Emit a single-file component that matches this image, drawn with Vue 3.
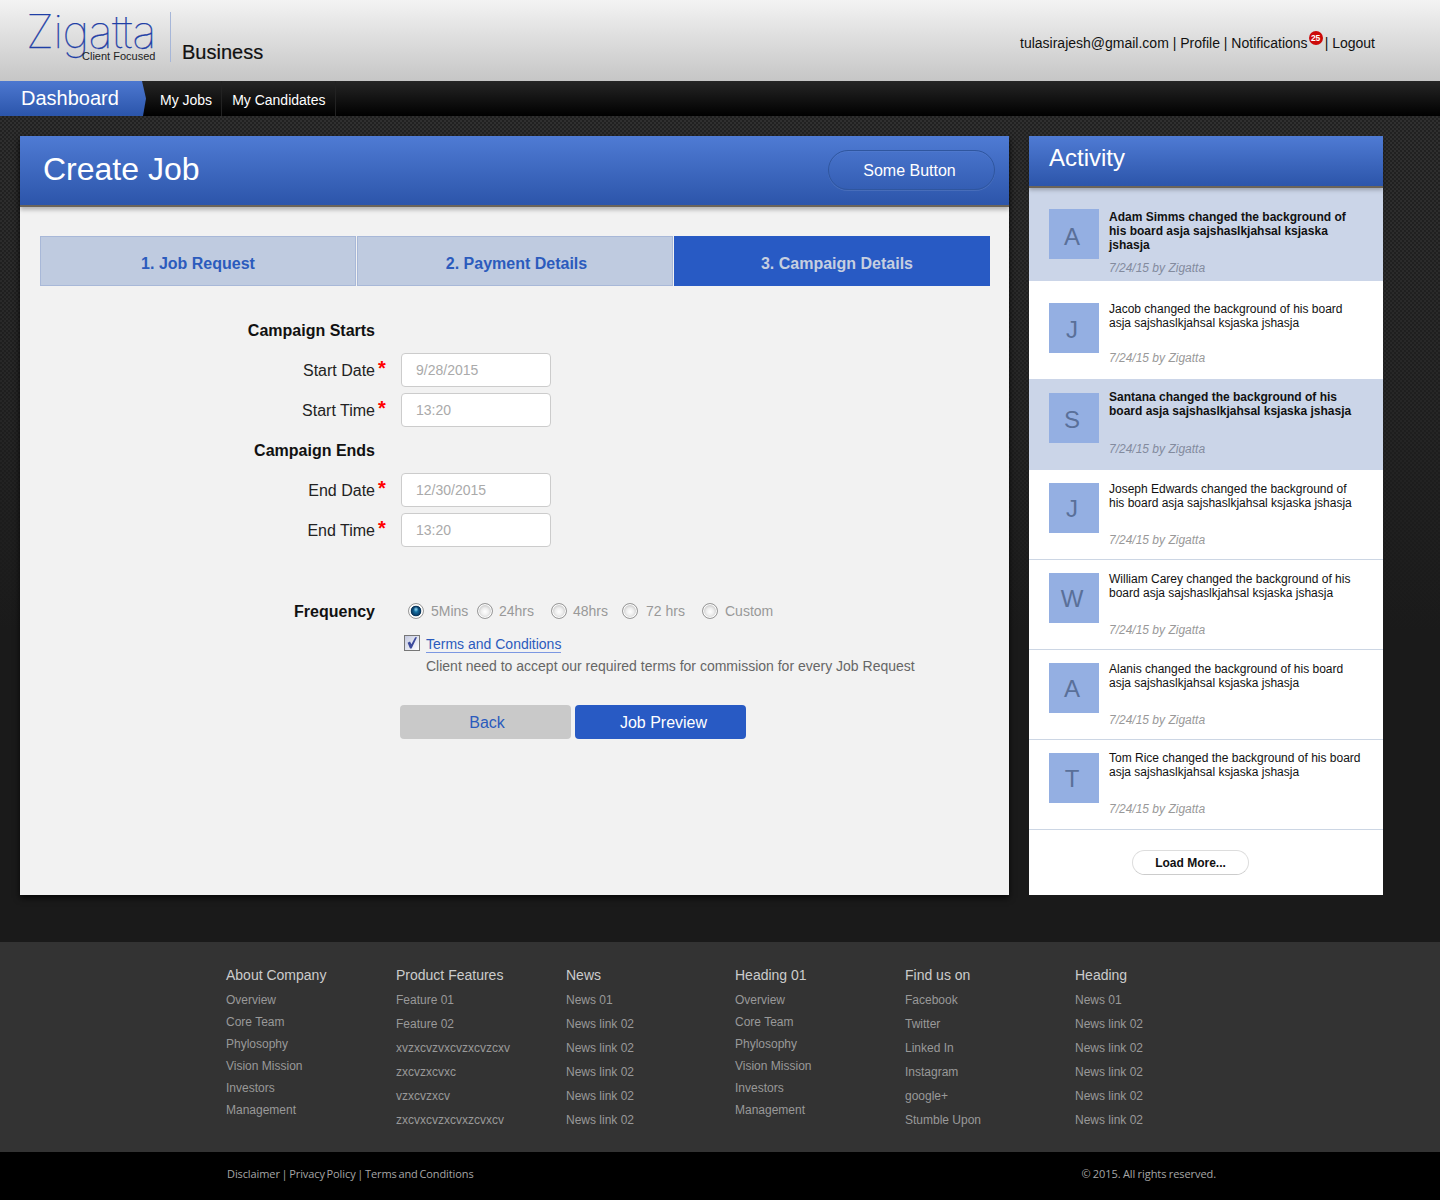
<script setup>
const steps = [
  { label: '1. Job Request', active: false },
  { label: '2. Payment Details', active: false },
  { label: '3. Campaign Details', active: true }
]
const sections = [
  { title: 'Campaign Starts', fields: [{ label: 'Start Date', value: '9/28/2015' }, { label: 'Start Time', value: '13:20' }] },
  { title: 'Campaign Ends', fields: [{ label: 'End Date', value: '12/30/2015' }, { label: 'End Time', value: '13:20' }] }
]
const radios = ['5Mins', '24hrs', '48hrs', '72 hrs', 'Custom']
const activity = [
  { l: 'A', t: 'Adam Simms changed the background of his board asja sajshaslkjahsal ksjaska jshasja', hi: true },
  { l: 'J', t: 'Jacob changed the background of his board asja sajshaslkjahsal ksjaska jshasja' },
  { l: 'S', t: 'Santana changed the background of his board asja sajshaslkjahsal ksjaska jshasja', hi: true },
  { l: 'J', t: 'Joseph Edwards changed the background of his board asja sajshaslkjahsal ksjaska jshasja' },
  { l: 'W', t: 'William Carey changed the background of his board asja sajshaslkjahsal ksjaska jshasja' },
  { l: 'A', t: 'Alanis changed the background of his board asja sajshaslkjahsal ksjaska jshasja' },
  { l: 'T', t: 'Tom Rice changed the background of his board asja sajshaslkjahsal ksjaska jshasja' }
]
const news = ['News 01', 'News link 02', 'News link 02', 'News link 02', 'News link 02', 'News link 02']
const company = ['Overview', 'Core Team', 'Phylosophy', 'Vision Mission', 'Investors', 'Management']
const footer = [
  { h: 'About Company', items: company, tight: true },
  { h: 'Product Features', items: ['Feature 01', 'Feature 02', 'xvzxcvzvxcvzxcvzcxv', 'zxcvzxcvxc', 'vzxcvzxcv', 'zxcvxcvzxcvxzcvxcv'] },
  { h: 'News', items: news },
  { h: 'Heading 01', items: company, tight: true },
  { h: 'Find us on', items: ['Facebook', 'Twitter', 'Linked In', 'Instagram', 'google+', 'Stumble Upon'] },
  { h: 'Heading', items: news }
]
</script>

<template>
  <div class="page">
    <header class="top">
      <div class="logo">
        <span class="logo-word">Zigatta</span>
        <span class="logo-tag">Client Focused</span>
      </div>
      <div class="logo-rule"></div>
      <div class="biz">Business</div>
      <div class="user">
        <span>tulasirajesh@gmail.com</span> | <span>Profile</span> | <span class="notif">Notifications<b class="badge">25</b></span><span class="after-notif">| Logout</span>
      </div>
    </header>

    <nav class="nav">
      <div class="dash">Dashboard</div>
      <a class="nav-link">My Jobs</a>
      <a class="nav-link">My Candidates</a>
    </nav>

    <main class="main">
      <section class="card">
        <div class="card-head">
          <h1>Create Job</h1>
          <button class="some-btn">Some Button</button>
        </div>
        <div class="tabs">
          <div v-for="s in steps" :key="s.label" class="tab" :class="{ on: s.active }">{{ s.label }}</div>
        </div>
        <form class="form" @submit.prevent>
          <template v-for="sec in sections" :key="sec.title">
            <div class="row"><div class="lab strong">{{ sec.title }}</div></div>
            <div v-for="f in sec.fields" :key="f.label" class="row">
              <label class="lab">{{ f.label }}</label>
              <span class="star">*</span>
              <div class="field">{{ f.value }}</div>
            </div>
          </template>
          <div class="row freq">
            <div class="lab strong">Frequency</div>
            <div class="radios">
              <div v-for="(r, i) in radios" :key="r" class="radio-item">
                <span class="radio" :class="{ sel: i === 0 }"></span>{{ r }}
              </div>
            </div>
          </div>
          <div class="terms">
            <span class="check">
              <svg width="14" height="14" viewBox="0 0 14 14"><path d="M2.6 6.8 L5 5.6 L6.4 8.2 L10.2 1.2 L12 1.2 L6.6 12.4 L5 12.4 Z" fill="#3c4a9c"/></svg>
            </span>
            <div>
              <a class="terms-link">Terms and Conditions</a>
              <p class="terms-note">Client need to accept our required terms for commission for every Job Request</p>
            </div>
          </div>
          <div class="actions">
            <button class="btn back">Back</button>
            <button class="btn go">Job Preview</button>
          </div>
        </form>
      </section>

      <aside class="side">
        <div class="side-head">Activity</div>
        <div v-for="(a, i) in activity" :key="i" class="item" :class="{ hi: a.hi }">
          <div class="avatar">{{ a.l }}</div>
          <div class="item-body">
            <p class="item-text">{{ a.t }}</p>
            <p class="item-date">7/24/15 by Zigatta</p>
          </div>
        </div>
        <div class="more-wrap"><button class="more">Load More...</button></div>
      </aside>
    </main>

    <footer class="foot">
      <div class="foot-cols">
        <div v-for="c in footer" :key="c.h" class="col" :class="{ tight: c.tight }">
          <h4>{{ c.h }}</h4>
          <a v-for="(it, i) in c.items" :key="i">{{ it }}</a>
        </div>
      </div>
    </footer>
    <div class="bottom">
      <span class="legal">Disclaimer | Privacy Policy | Terms and Conditions</span>
      <span>© 2015. All rights reserved.</span>
    </div>
  </div>
</template>

<style>
html, body { margin: 0; background: #000; }
</style>

<style scoped>
.page { width: 1440px; font-family: "Liberation Sans", Arial, sans-serif; }
p, h1, h4 { margin: 0; font-weight: normal; }
button { font-family: inherit; cursor: pointer; border: 0; }

.top {
  position: relative; height: 81px;
  background: linear-gradient(#f3f3f3, #c6c6c6);
  display: flex; align-items: flex-start;
}
.logo { position: relative; width: 170px; height: 81px; flex: none; }
.logo-word {
  position: absolute; left: 26px; top: 3px;
  font-family: Inter, sans-serif; font-weight: 100; font-size: 46px; line-height: 56px;
  letter-spacing: -0.7px; color: #1f3fa6; -webkit-text-stroke: 0.25px #1f3fa6;
}
.logo-tag { position: absolute; left: 82px; top: 50px; font-size: 11px; line-height: 12px; color: #222; }
.logo-rule { width: 1px; height: 50px; margin-top: 12px; background: #a6b6d8; flex: none; }
.biz { margin: 41px 0 0 11px; font-size: 20px; line-height: 23px; color: #111; -webkit-text-stroke: 0.2px #111; }
.user {
  position: absolute; left: 1020px; top: 35px; font-size: 14px; line-height: 16px; color: #111; white-space: pre;
}
.notif { position: relative; }
.after-notif { margin-left: 17px; }
.badge {
  position: absolute; left: 100%; top: -4px; margin-left: 1px; width: 14px; height: 14px; border-radius: 50%;
  background: #cc0a0a; color: #fff; font-size: 8.5px; line-height: 14px; text-align: center; font-weight: bold;
}

.nav {
  height: 35px; display: flex; align-items: stretch;
  background: linear-gradient(#262626, #000);
}
.dash {
  width: 146px; box-sizing: border-box; padding-left: 21px; margin-right: 4px;
  background: linear-gradient(#4d78d0, #2b55ab);
  clip-path: polygon(0 0, 142px 0, 146px 50%, 143px 100%, 0 100%);
  color: #fff; font-size: 20px; line-height: 34px;
}
.nav-link {
  padding: 0 9px 0 10px; color: #fff; font-size: 14px; line-height: 38px;
  border-right: 1px solid #222;
}

.main {
  height: 826px; box-sizing: border-box; padding: 20px; display: flex; gap: 20px; align-items: flex-start;
  background-color: #1a1a1a;
  background-image:
    linear-gradient(rgba(26,26,26,0) 0, rgba(26,26,26,.45) 300px, #1a1a1a 515px),
    radial-gradient(circle at 1px 1px, #3a3a3a 0.5px, rgba(0,0,0,0) 1px),
    radial-gradient(circle at 3px 3px, #3a3a3a 0.5px, rgba(0,0,0,0) 1px),
    linear-gradient(#212121, #212121);
  background-size: 100% 100%, 4px 4px, 4px 4px, 100% 100%;
}
.card {
  width: 989px; height: 759px; background: #f2f2f2; box-shadow: 0 3px 6px rgba(0,0,0,.75);
}
.card-head {
  height: 69px; box-sizing: border-box; padding: 0 14px 0 23px;
  display: flex; align-items: center; justify-content: space-between;
  background: linear-gradient(#4f7bd4, #2c55aa);
  box-shadow: 0 2px 0 #6b6459, 0 5px 4px rgba(0,0,0,.25);
}
.card-head h1 { color: #fff; font-size: 32px; line-height: 37px; margin-top: -2px; }
.some-btn {
  width: 167px; height: 40px; border-radius: 20px; background: transparent; margin-top: -1px; padding: 2px 4px 0 0;
  border: 1px solid #2f569f; box-shadow: 0 1px 0 rgba(255,255,255,.1), inset 0 1px 0 rgba(255,255,255,.04);
  color: #fff; font-size: 16px;
}
.tabs { display: flex; gap: 1px; margin: 31px 19px 0 20px; }
.tab {
  flex: none; width: 316px; height: 50px; box-sizing: border-box; background: #bfcbe0; border: 1px solid #a8b8d8;
  color: #2b5bbd; font-size: 16px; font-weight: bold; line-height: 53px; text-align: center;
}
.tab:nth-child(2) { padding-left: 3px; }
.tab.on { background: #285ac4; border-color: #285ac4; color: #c6cfe0; padding-left: 10px; }

.form { padding-top: 27px; display: flex; flex-direction: column; gap: 6px; }
.row { display: flex; height: 34px; align-items: center; }
.lab { width: 355px; text-align: right; font-size: 16px; color: #222; line-height: 36px; height: 34px; flex: none; }
.lab.strong { font-weight: bold; color: #111; }
.star { width: 26px; flex: none; box-sizing: border-box; padding-left: 3px; color: #f00; font-size: 20px; font-weight: bold; line-height: 22px; height: 22px; margin-top: -5px; }
.field {
  width: 150px; height: 34px; box-sizing: border-box; padding-left: 14px; background: #fff;
  border: 1px solid #ccc; border-radius: 4px; color: #aaa; font-size: 14px; line-height: 32px;
}
.freq { margin-top: 41px; }
.radios {
  margin-left: 33px; display: grid; grid-template-columns: 69px 74px 71px 80px auto;
  color: #999; font-size: 14px; line-height: 34px;
}
.radio-item { display: flex; align-items: center; gap: 7px; }
.radio-item:nth-child(2), .radio-item:nth-child(3) { gap: 6px; }
.radio-item:nth-child(4) { gap: 8px; }
.radio {
  width: 14px; height: 14px; border: 1px solid #999; border-radius: 50%;
  background: radial-gradient(circle at 50% 55%, #fff 0, #eee 35%, #bbb 80%, #ddd 100%);
  box-shadow: inset 0 0 0 1px #fff;
}
.radio.sel {
  background:
    radial-gradient(circle at 50% 38%, #9adcf8 0, rgba(154,220,248,0) 2.5px),
    radial-gradient(circle at 50% 50%, #1c86b8 0, #0c4a78 3.5px, #0a3458 5px, #eee 5.6px, #ddd 100%);
}
.terms { display: flex; gap: 6px; margin: 1px 0 0 384px; }
.check {
  width: 16px; height: 16px; box-sizing: border-box; border: 1px solid #777;
  background: linear-gradient(135deg, #c4c9e0, #fff); flex: none;
  display: flex; align-items: center; justify-content: center;
}
.terms-link { display: inline-block; color: #2b5bbd; font-size: 14px; line-height: 16px; border-bottom: 1px solid #7b97e2; }
.terms-note { margin-top: 5px; color: #666; font-size: 14px; line-height: 16px; white-space: nowrap; }
.actions { display: flex; gap: 4px; margin: 25px 0 0 380px; }
.btn { width: 171px; height: 34px; border-radius: 4px; font-size: 16px; }
.back { background: #c9c9c9; color: #2b5bbd; padding: 2px 0 0 3px; }
.go { background: #285ac4; color: #fff; padding: 2px 0 0 6px; }

.side { width: 354px; height: 759px; background: #fff; display: flex; flex-direction: column; }
.side-head {
  height: 50px; box-sizing: border-box; padding: 8px 20px 0; flex: none;
  background: linear-gradient(#4f7bd4, #2c55aa); color: #fff; font-size: 24px; line-height: 28px;
  box-shadow: 0 2px 0 #6b6459, 0 4px 4px rgba(0,0,0,.25); position: relative;
}
.item { display: flex; gap: 10px; box-sizing: border-box; height: 90px; padding: 13px 20px 0; }
.item:not(.hi) { border-bottom: 1px solid #ccd6e4; }
.item.hi { background: #cbd5e8; }
.avatar {
  width: 50px; height: 50px; box-sizing: border-box; padding-right: 4px; background: #94afe2; color: #5a7099;
  font-size: 24px; line-height: 52px; text-align: center; flex: none;
}
.item-text { margin-top: -1px; font-size: 12px; line-height: 14px; color: #111; height: 42px; }
.hi .item-text { font-weight: bold; }
.item-date { margin-top: 8px; font-size: 12px; line-height: 14px; font-style: italic; color: #999; }
.hi .item-date { color: #838b9e; }
.item:nth-child(2) { height: 95px; padding-top: 23px; }
.item:nth-child(2) .avatar { line-height: 56px; }
.item:nth-child(2) .item-text { margin-top: 1px; }
.item:nth-child(2) .item-date { margin-top: 9px; }
.item:nth-child(3) { height: 98px; padding-top: 22px; border-bottom: 0; }
.item:nth-child(3) .avatar, .item:nth-child(4) .avatar { line-height: 54px; }
.item:nth-child(3) .item-date { margin-top: 7px; }
.item:nth-child(4) { height: 91px; padding-top: 14px; }
.item:nth-child(4) .item-text { margin-top: -3px; }
.item:nth-child(4) .item-date { margin-top: 10px; }
.item:nth-child(5) .item-date, .item:nth-child(6) .item-date, .item:nth-child(7) .item-date { margin-top: 9px; }
.item:nth-child(8) .item-text { margin-top: -2px; }
.item:nth-child(8) .item-date { margin-top: 9px; }
.more-wrap { flex: 1; display: flex; justify-content: center; align-items: flex-start; padding: 20px 31px 0 0; }
.more {
  width: 117px; height: 25px; border-radius: 13px; background: #fff; border: 1px solid #ddd;
  border-bottom-color: #ccc; color: #111; font-size: 12px; font-weight: bold;
}

.foot { height: 210px; background: #333; box-sizing: border-box; padding: 24px 0 0 226px; }
.foot-cols { display: grid; grid-template-columns: 170px 170px 169px 170px 170px 170px; }
.col { display: flex; flex-direction: column; color: #999; font-size: 12px; }
.col h4 { font-size: 14px; line-height: 18px; color: #ccc; margin-bottom: 4px; }
.col.tight h4 { margin-bottom: 5px; }
.col a { line-height: 24px; height: 24px; white-space: nowrap; }
.col.tight a { height: 22px; line-height: 22px; }
.bottom {
  height: 48px; background: #000; box-sizing: border-box; padding: 0 224px 6px 227px;
  display: flex; align-items: center; justify-content: space-between;
  font-family: "Open Sans", sans-serif; font-size: 11px; letter-spacing: -0.07px; word-spacing: -0.4px; color: #a6a6a6;
}
.legal { letter-spacing: -0.1px; word-spacing: -1px; }
</style>
